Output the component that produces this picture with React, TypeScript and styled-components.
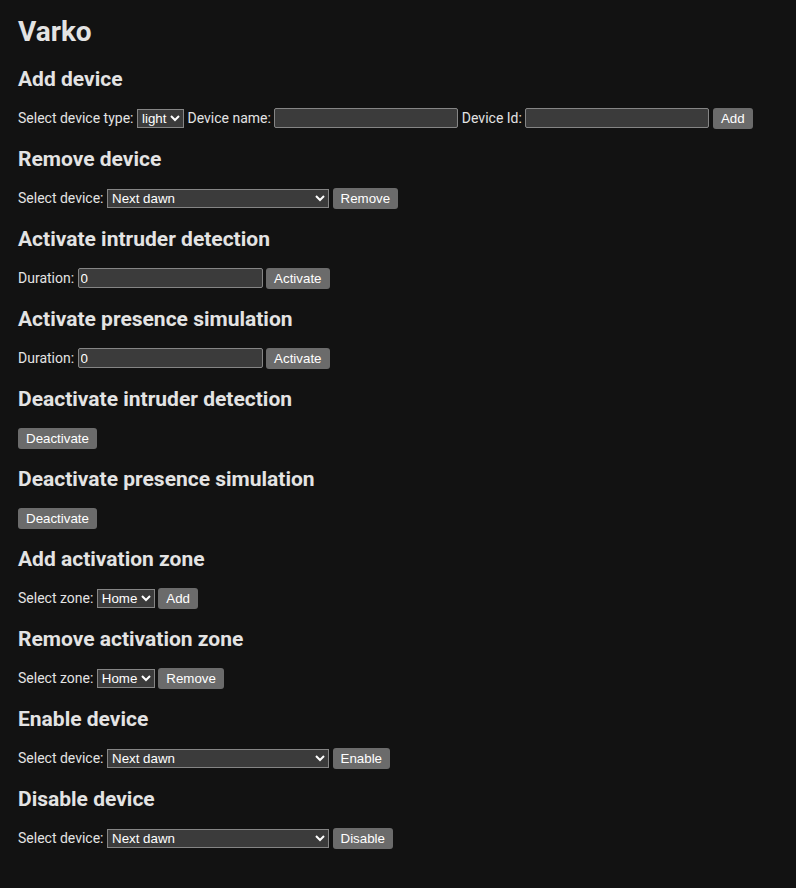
import React, { useState } from "react";
import styled, { createGlobalStyle } from "styled-components";

const GlobalStyle = createGlobalStyle`
  :root {
    color-scheme: dark;
  }
  body {
    margin: 0;
    background: #121212;
    color: #e3e3e3;
    font-family: Roboto, "Liberation Sans", sans-serif;
  }
`;

const Page = styled.div`
  padding: 12px 18px 30px;
  display: flex;
  flex-direction: column;
`;

const Title = styled.h1`
  margin: 0 0 8px;
  height: 38px;
  display: flex;
  align-items: center;
  font-size: 28px;
  font-weight: 700;
`;

const Heading = styled.h2`
  margin: 0;
  height: 40px;
  display: flex;
  align-items: center;
  padding-top: 2px;
  box-sizing: border-box;
  font-size: 21px;
  font-weight: 700;
`;

const Row = styled.div`
  height: 40px;
  display: flex;
  align-items: center;
  gap: 3.5px;
  font-size: 14px;
`;

const Label = styled.label`
  font-size: 14px;
`;

const TextInput = styled.input<{ $width?: number }>`
  box-sizing: border-box;
  width: ${(p) => p.$width ?? 184}px;
  height: 20px;
  padding: 1px 2px;
  background: #3b3b3b;
  color: #fff;
  border: 1px solid #858585;
  border-radius: 2px;
  font-family: "Liberation Sans", Arial, sans-serif;
  font-size: 13.33px;
`;

const Select = styled.select<{ $width: number }>`
  box-sizing: border-box;
  width: ${(p) => p.$width}px;
  height: 19px;
  background: #3b3b3b;
  color: #fff;
  border: 1px solid #858585;
  border-radius: 0;
  font-family: "Liberation Sans", Arial, sans-serif;
  font-size: 13.33px;
`;

const Button = styled.button`
  box-sizing: border-box;
  height: 21px;
  padding: 1px 8px;
  background: #6b6b6b;
  color: #fff;
  border: none;
  border-radius: 3px;
  font-family: "Liberation Sans", Arial, sans-serif;
  font-size: 13.33px;
`;

const devices = ["Next dawn"];
const zones = ["Home"];

const DeviceSelect = () => (
  <Select $width={222}>
    {devices.map((d) => (
      <option key={d}>{d}</option>
    ))}
  </Select>
);

const ZoneSelect = () => (
  <Select $width={58}>
    {zones.map((z) => (
      <option key={z}>{z}</option>
    ))}
  </Select>
);

const App = () => {
  const [intruderDuration, setIntruderDuration] = useState("0");
  const [presenceDuration, setPresenceDuration] = useState("0");

  return (
    <Page>
      <GlobalStyle />
      <Title>Varko</Title>

      <Heading>Add device</Heading>
      <Row>
        <Label>Select device type:</Label>
        <Select $width={47}>
          <option>light</option>
        </Select>
        <Label>Device name:</Label>
        <TextInput $width={184} />
        <Label>Device Id:</Label>
        <TextInput $width={184} />
        <Button>Add</Button>
      </Row>

      <Heading>Remove device</Heading>
      <Row>
        <Label>Select device:</Label>
        <DeviceSelect />
        <Button>Remove</Button>
      </Row>

      <Heading>Activate intruder detection</Heading>
      <Row>
        <Label>Duration:</Label>
        <TextInput
          $width={185}
          value={intruderDuration}
          onChange={(e) => setIntruderDuration(e.target.value)}
        />
        <Button>Activate</Button>
      </Row>

      <Heading>Activate presence simulation</Heading>
      <Row>
        <Label>Duration:</Label>
        <TextInput
          $width={185}
          value={presenceDuration}
          onChange={(e) => setPresenceDuration(e.target.value)}
        />
        <Button>Activate</Button>
      </Row>

      <Heading>Deactivate intruder detection</Heading>
      <Row>
        <Button>Deactivate</Button>
      </Row>

      <Heading>Deactivate presence simulation</Heading>
      <Row>
        <Button>Deactivate</Button>
      </Row>

      <Heading>Add activation zone</Heading>
      <Row>
        <Label>Select zone:</Label>
        <ZoneSelect />
        <Button>Add</Button>
      </Row>

      <Heading>Remove activation zone</Heading>
      <Row>
        <Label>Select zone:</Label>
        <ZoneSelect />
        <Button>Remove</Button>
      </Row>

      <Heading>Enable device</Heading>
      <Row>
        <Label>Select device:</Label>
        <DeviceSelect />
        <Button>Enable</Button>
      </Row>

      <Heading>Disable device</Heading>
      <Row>
        <Label>Select device:</Label>
        <DeviceSelect />
        <Button>Disable</Button>
      </Row>
    </Page>
  );
};

export default App;
